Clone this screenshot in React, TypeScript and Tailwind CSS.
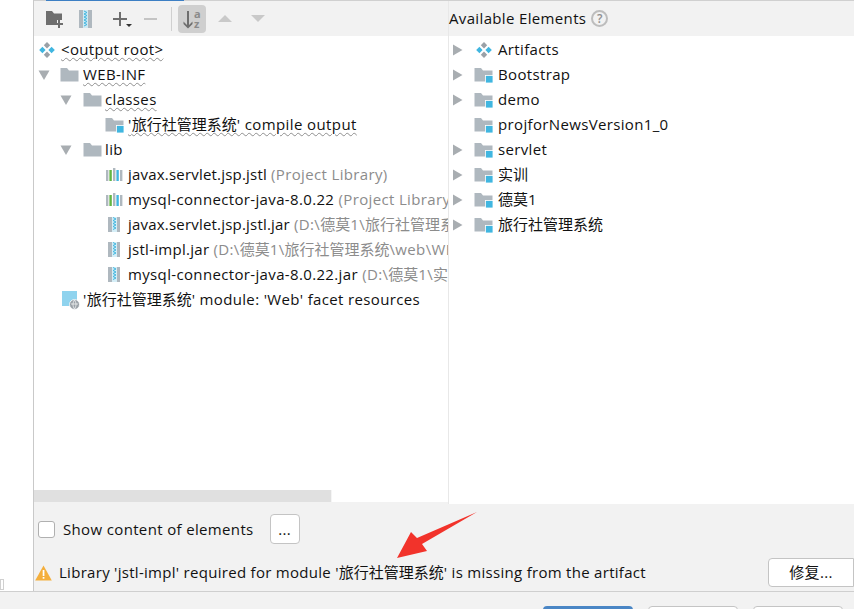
import React from "react";

const Folder = ({ module }: { module?: boolean }) => (
  <svg width="19" height="18" viewBox="0 0 19 18" className="shrink-0">
    <path d="M0.500 2h6.500l2 2.500h9.500V15.500H0.500z" fill="#afb8bf" />
    {module && <rect x="11.5" y="9.5" width="7.5" height="7.5" fill="#40b6e0" stroke="#fff" strokeWidth="0.8" />}
  </svg>
);

const Artifact = () => (
  <svg width="18" height="18" viewBox="0 0 18 18" className="shrink-0">
    <path d="M9 1l3.2 3.2L9 7.4 5.8 4.2z" fill="#9aa1a7" />
    <path d="M9 10.6l3.2 3.2L9 17l-3.2-3.2z" fill="#9aa1a7" />
    <path d="M4.4 5.8L7.6 9l-3.2 3.2L1.2 9z" fill="#40b6e0" />
    <path d="M13.6 5.8L16.8 9l-3.2 3.2L10.4 9z" fill="#40b6e0" />
  </svg>
);

const Lib = () => (
  <svg width="19" height="18" viewBox="0 0 19 18" className="shrink-0">
    <rect x="1" y="4" width="2.4" height="11" fill="#afb8bf" />
    <rect x="4.4" y="4" width="2.4" height="11" fill="#62b543" />
    <rect x="8" y="2" width="2.4" height="13" fill="#afb8bf" />
    <rect x="11.4" y="4" width="2.4" height="11" fill="#40b6e0" />
    <rect x="15" y="4" width="2.4" height="11" fill="#afb8bf" />
  </svg>
);

const Jar = () => (
  <svg width="19" height="18" viewBox="0 0 19 18" className="shrink-0">
    <rect x="3" y="1" width="12" height="15" fill="#afb8bf" />
    <rect x="7" y="1" width="5" height="15" fill="#d5eef7" />
    <path d="M8 1.5l3 1.5-3 1.5 3 1.5-3 1.5 3 1.5-3 1.5 3 1.5-3 1.5" fill="none" stroke="#40b6e0" strokeWidth="1" />
  </svg>
);

const WebRes = () => (
  <svg width="20" height="20" viewBox="0 0 20 20" className="shrink-0">
    <rect x="1" y="1" width="15" height="15" fill="#8fd3ee" />
    <circle cx="13.5" cy="14.5" r="5" fill="#9aa1a7" stroke="#fff" strokeWidth="0.8" />
    <path d="M10 14h7M13.5 10c-2 3-2 6 0 9M13.5 10c2 3 2 6 0 9" stroke="#fff" strokeWidth="0.7" fill="none" />
  </svg>
);

const Arrow = ({ dir }: { dir?: "down" | "right" }) =>
  dir === "down" ? (
    <svg width="12" height="12" viewBox="0 0 12 12" className="shrink-0">
      <path d="M0.5 1.5h11L6 11z" fill="#a8adb1" />
    </svg>
  ) : dir === "right" ? (
    <svg width="12" height="12" viewBox="0 0 12 12" className="shrink-0">
      <path d="M1 0.5v11L10.5 6z" fill="#a8adb1" />
    </svg>
  ) : (
    <span className="w-[12px] shrink-0" />
  );

const wavy = "underline decoration-wavy decoration-[#8f8f8f] decoration-1 underline-offset-2";

const Row = ({ className, children }: { className: string; children: React.ReactNode }) => (
  <div className={`flex h-[25px] items-center whitespace-nowrap ${className}`}>{children}</div>
);

const Gray = ({ children }: { children: React.ReactNode }) => (
  <span className="tracking-[0.35px] text-[#8c8c8c]">{children}</span>
);
const C = ({ children }: { children: React.ReactNode }) => <span className="tracking-normal">{children}</span>;

const elements: { label: React.ReactNode; expandable: boolean }[] = [
  { label: "Bootstrap", expandable: true },
  { label: "demo", expandable: true },
  { label: "projforNewsVersion1_0", expandable: false },
  { label: "servlet", expandable: true },
  { label: <C>实训</C>, expandable: true },
  { label: <C>德莫1</C>, expandable: true },
  { label: <C>旅行社管理系统</C>, expandable: true },
];

export default function App() {
  return (
    <div
      className="flex h-[609px] w-[854px] flex-col overflow-hidden bg-white text-[15px] tracking-[0.35px] text-[#111111]"
      style={{ fontFamily: '"Open Sans", "Noto Sans", "Noto Sans CJK SC", sans-serif' }}
    >
      <div className="relative flex min-h-0 flex-1">
        {/* left gutter */}
        <div className="flex w-[33px] shrink-0 flex-col justify-end bg-white">
          <div className="mb-[1px] h-[11px] w-[4px] border border-[#d0d0d0] bg-white" />
        </div>

        <div className="flex min-w-0 flex-1 flex-col border-l border-[#c9c9c9] bg-[#f2f2f2]">
          {/* top strip */}
          <div className="h-[1px] bg-[#d0d0d0]">
            <div className="ml-[12px] h-[1px] w-[138px] bg-[#3d7fc4]" />
          </div>

          <div className="flex min-h-0 flex-1">
            {/* Left column */}
            <div className="flex w-[414px] shrink-0 flex-col">
              <div className="flex h-[35px] items-center bg-[#f2f2f2] pl-[11px]">
                <svg width="20" height="20" viewBox="0 0 20 20">
                  <path d="M1 2h6l2 2.5h8V11h-5v5H1z" fill="#6e6e6e" />
                  <path d="M15 11v3h3v2h-3v3h-2v-3h-1v-2h1v-3z" fill="#6e6e6e" />
                </svg>
                <svg width="16" height="20" viewBox="0 0 16 20" className="ml-[13px]">
                  <rect x="1" y="1" width="13" height="18" fill="#afb8bf" />
                  <rect x="5" y="1" width="5" height="18" fill="#cfe9f3" />
                  <path d="M6 2l3 1.5-3 1.5 3 1.5L6 8l3 1.5L6 11l3 1.5L6 14l3 1.5L6 17" fill="none" stroke="#40b6e0" />
                </svg>
                <div className="relative ml-[18px] h-[20px] w-[20px]">
                  <svg width="20" height="20" viewBox="0 0 20 20">
                    <path d="M7 3h2v6h6v2H9v6H7v-6H1V9h6z" fill="#6e6e6e" />
                    <path d="M14 15h6l-3 3z" fill="#333" />
                  </svg>
                </div>
                <svg width="16" height="20" viewBox="0 0 16 20" className="ml-[11px]">
                  <rect x="1" y="9" width="13" height="2" fill="#c4c4c4" />
                </svg>
                <div className="ml-[12px] h-[24px] w-[1px] bg-[#d0d0d0]" />
                <div className="ml-[6px] flex h-[28px] w-[28px] items-center justify-center rounded-[4px] bg-[#cfcfcf]">
                  <svg width="24" height="24" viewBox="0 0 24 24">
                    <path d="M7 4h2v14l3.5-3.5V17L8 21.5 3.500 17v-2.500L7 18z" fill="#6e6e6e" />
                    <text x="14" y="11" fontSize="11" fontWeight="700" fill="#8a8a8a" letterSpacing="0">a</text>
                    <text x="14" y="21" fontSize="11" fontWeight="700" fill="#8a8a8a" letterSpacing="0">z</text>
                  </svg>
                </div>
                <svg width="16" height="12" viewBox="0 0 16 12" className="ml-[11px]">
                  <path d="M8 2l7 7H1z" fill="#c9c9c9" />
                </svg>
                <svg width="16" height="12" viewBox="0 0 16 12" className="ml-[17px]">
                  <path d="M1 2h14L8 9z" fill="#c9c9c9" />
                </svg>
              </div>

              <div className="min-h-0 flex-1 overflow-hidden bg-white pt-[1px]">
                <Row className="pl-[4px]">
                  <Artifact />
                  <span className={`ml-[5px] ${wavy}`}>&lt;output root&gt;</span>
                </Row>
                <Row className="pl-[4px]">
                  <Arrow dir="down" />
                  <span className="ml-[10px]"><Folder /></span>
                  <span className={`ml-[4px] ${wavy}`}>WEB-INF</span>
                </Row>
                <Row className="pl-[26px]">
                  <Arrow dir="down" />
                  <span className="ml-[11px]"><Folder /></span>
                  <span className={`ml-[3px] ${wavy}`}>classes</span>
                </Row>
                <Row className="pl-[71px]">
                  <Folder module />
                  <span className={`ml-[4px] tracking-[0.4px] ${wavy}`}>'<C>旅行社管理系统</C>' compile output</span>
                </Row>
                <Row className="pl-[26px]">
                  <Arrow dir="down" />
                  <span className="ml-[11px]"><Folder /></span>
                  <span className="ml-[3px]">lib</span>
                </Row>
                <Row className="pl-[71px]">
                  <Lib />
                  <span className="ml-[4px] tracking-[0.2px]">javax.servlet.jsp.jstl <Gray>(Project Library)</Gray></span>
                </Row>
                <Row className="pl-[71px]">
                  <Lib />
                  <span className="ml-[4px]">mysql-connector-java-8.0.22 <Gray>(Project Library)</Gray></span>
                </Row>
                <Row className="pl-[71px]">
                  <Jar />
                  <span className="ml-[4px] tracking-[0.2px]">javax.servlet.jsp.jstl.jar <Gray>(D:\<C>德莫</C>1\<C>旅行社管理系统</C>)</Gray></span>
                </Row>
                <Row className="pl-[71px]">
                  <Jar />
                  <span className="ml-[4px] tracking-[0.28px]">jstl-impl.jar <Gray>(D:\<C>德莫</C>1\<C>旅行社管理系统</C>\web\WEB)</Gray></span>
                </Row>
                <Row className="pl-[71px]">
                  <Jar />
                  <span className="ml-[4px]">mysql-connector-java-8.0.22.jar <Gray>(D:\<C>德莫</C>1\<C>实训</C>)</Gray></span>
                </Row>
                <Row className="pl-[27px]">
                  <WebRes />
                  <span className="ml-[2px]">'<C>旅行社管理系统</C>' module: 'Web' facet resources</span>
                </Row>
              </div>

              <div className="flex h-[12px] shrink-0 bg-white">
                <div className="w-[298px] border-r border-[#f5f5f5] bg-[#e0e0e0]" />
              </div>
              <div className="h-[2px] shrink-0 bg-[#f2f2f2]" />
            </div>

            {/* Right column */}
            <div className="flex min-w-0 flex-1 flex-col border-l border-[#e8e8e8]">
              <div className="flex h-[35px] items-center gap-[5px] bg-[#f2f2f2]">
                <span className="whitespace-nowrap">Available Elements</span>
                <span className="flex h-[17px] w-[17px] items-center justify-center rounded-full border-2 border-[#bdbdbd] text-[12px] font-semibold text-[#8f8f8f]">?</span>
              </div>
              <div className="min-h-0 flex-1 bg-white pl-[3px] pt-[1px]">
                <Row className="">
                  <Arrow dir="right" />
                  <span className="ml-[11px]"><Artifact /></span>
                  <span className="ml-[5px]">Artifacts</span>
                </Row>
                {elements.map(({ label, expandable }, i) => (
                  <Row className="" key={i}>
                    <Arrow dir={expandable ? "right" : undefined} />
                    <span className="ml-[10px]"><Folder module /></span>
                    <span className="ml-[5px]">{label}</span>
                  </Row>
                ))}
              </div>
            </div>
          </div>

          {/* bottom panel */}
          <div className="flex h-[87px] shrink-0 flex-col bg-[#f2f2f2] pl-[1px]">
            <div className="mt-[10px] flex h-[30px] items-center">
              <span className="ml-[3px] h-[17px] w-[17px] rounded-[3px] border border-[#b0b0b0] bg-white" />
              <span className="ml-[8px] whitespace-nowrap">Show content of elements</span>
              <span className="ml-[16px] flex h-[30px] w-[30px] items-center justify-center rounded-[4px] border border-[#c4c4c4] bg-white">...</span>
            </div>
            <div className="mt-[14px] flex h-[29px] items-center">
              <svg width="17" height="16" viewBox="0 0 17 16" className="shrink-0">
                <path d="M8.5 0.5L16.8 15.5H0.2z" fill="#f4af3d" />
                <rect x="7.7" y="5" width="1.7" height="6" fill="#fff" />
                <rect x="7.7" y="12" width="1.7" height="1.700" fill="#fff" />
              </svg>
              <span className="ml-[7px] whitespace-nowrap tracking-[0.29px]">Library 'jstl-impl' required for module '<C>旅行社管理系统</C>' is missing from the artifact</span>
              <span className="ml-auto flex h-[29px] w-[86px] shrink-0 items-center justify-center rounded-l-[4px] border border-[#c4c4c4] bg-white">修复...</span>
            </div>
          </div>
        </div>

        {/* annotation */}
        <svg width="90" height="50" viewBox="0 0 90 50" className="absolute left-[392px] top-[510px]">
          <path d="M85 2L30 34l5 7L5 48l14-26 6 6z" fill="#f2332b" />
        </svg>
      </div>

      {/* footer */}
      <div className="flex h-[18px] shrink-0 gap-[15px] border-t border-[#cfcfcf] bg-[#f2f2f2] pl-[543px] pt-[14px]">
        <span className="h-[20px] w-[90px] rounded-[4px] bg-[#4a86c5]" />
        <span className="h-[20px] w-[90px] rounded-[4px] border border-[#c4c4c4] bg-white" />
        <span className="h-[20px] w-[90px] rounded-[4px] border border-[#c4c4c4] bg-white" />
      </div>
    </div>
  );
}
